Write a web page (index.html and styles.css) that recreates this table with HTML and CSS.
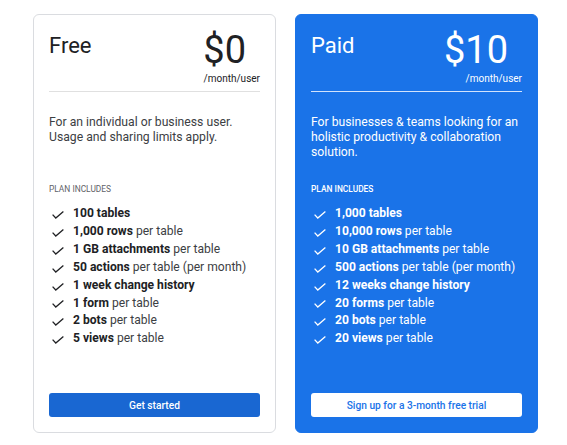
FILE: index.html
```html
<!DOCTYPE html>
<html>
<head>
<meta charset="utf-8">
<link rel="stylesheet" href="styles.css">
</head>
<body>
<div class="plans">
  <div class="card card-free">
    <div class="head">
      <div class="title">Free</div>
      <div class="price-block">
        <div class="price">$0</div>
        <div class="per">/month/user</div>
      </div>
    </div>
    <div class="divider"></div>
    <p class="desc">For an individual or business user. Usage and sharing limits apply.</p>
    <div class="includes">PLAN INCLUDES</div>
    <ul class="features">
      <li><svg class="check" viewBox="0 0 12 8"><path d="M0.6 3.6 L3.8 7 L11.4 0.6"/></svg><span><b>100 tables</b></span></li>
      <li><svg class="check" viewBox="0 0 12 8"><path d="M0.6 3.6 L3.8 7 L11.4 0.6"/></svg><span><b>1,000 rows</b> per table</span></li>
      <li><svg class="check" viewBox="0 0 12 8"><path d="M0.6 3.6 L3.8 7 L11.4 0.6"/></svg><span><b>1 GB attachments</b> per table</span></li>
      <li><svg class="check" viewBox="0 0 12 8"><path d="M0.6 3.6 L3.8 7 L11.4 0.6"/></svg><span><b>50 actions</b> per table (per month)</span></li>
      <li><svg class="check" viewBox="0 0 12 8"><path d="M0.6 3.6 L3.8 7 L11.4 0.6"/></svg><span><b>1 week change history</b></span></li>
      <li><svg class="check" viewBox="0 0 12 8"><path d="M0.6 3.6 L3.8 7 L11.4 0.6"/></svg><span><b>1 form</b> per table</span></li>
      <li><svg class="check" viewBox="0 0 12 8"><path d="M0.6 3.6 L3.8 7 L11.4 0.6"/></svg><span><b>2 bots</b> per table</span></li>
      <li><svg class="check" viewBox="0 0 12 8"><path d="M0.6 3.6 L3.8 7 L11.4 0.6"/></svg><span><b>5 views</b> per table</span></li>
    </ul>
    <button class="btn">Get started</button>
  </div>
  <div class="card card-paid">
    <div class="head">
      <div class="title">Paid</div>
      <div class="price-block">
        <div class="price">$10</div>
        <div class="per">/month/user</div>
      </div>
    </div>
    <div class="divider"></div>
    <p class="desc">For businesses &amp; teams looking for an holistic productivity &amp; collaboration solution.</p>
    <div class="includes">PLAN INCLUDES</div>
    <ul class="features">
      <li><svg class="check" viewBox="0 0 12 8"><path d="M0.6 3.6 L3.8 7 L11.4 0.6"/></svg><span><b>1,000 tables</b></span></li>
      <li><svg class="check" viewBox="0 0 12 8"><path d="M0.6 3.6 L3.8 7 L11.4 0.6"/></svg><span><b>10,000 rows</b> per table</span></li>
      <li><svg class="check" viewBox="0 0 12 8"><path d="M0.6 3.6 L3.8 7 L11.4 0.6"/></svg><span><b>10 GB attachments</b> per table</span></li>
      <li><svg class="check" viewBox="0 0 12 8"><path d="M0.6 3.6 L3.8 7 L11.4 0.6"/></svg><span><b>500 actions</b> per table (per month)</span></li>
      <li><svg class="check" viewBox="0 0 12 8"><path d="M0.6 3.6 L3.8 7 L11.4 0.6"/></svg><span><b>12 weeks change history</b></span></li>
      <li><svg class="check" viewBox="0 0 12 8"><path d="M0.6 3.6 L3.8 7 L11.4 0.6"/></svg><span><b>20 forms</b> per table</span></li>
      <li><svg class="check" viewBox="0 0 12 8"><path d="M0.6 3.6 L3.8 7 L11.4 0.6"/></svg><span><b>20 bots</b> per table</span></li>
      <li><svg class="check" viewBox="0 0 12 8"><path d="M0.6 3.6 L3.8 7 L11.4 0.6"/></svg><span><b>20 views</b> per table</span></li>
    </ul>
    <button class="btn btn-light">Sign up for a 3-month free trial</button>
  </div>
</div>
</body>
</html>
```
FILE: styles.css
```css
* { box-sizing: border-box; }
html, body { margin: 0; padding: 0; background: #ffffff; }
body { font-family: Roboto, "Liberation Sans", sans-serif; }

.plans {
  display: flex;
  gap: 19px;
  padding: 14px 0 0 33px;
}

.card {
  width: 243px;
  height: 419px;
  border-radius: 6px;
  padding: 16px 15px 15px;
  display: flex;
  flex-direction: column;
}
.card-free {
  background: #ffffff;
  border: 1px solid #dadce0;
  color: #202124;
}
.card-paid {
  background: #1a73e8;
  border: 1px solid #1a73e8;
  color: #ffffff;
}

.head {
  display: flex;
  justify-content: space-between;
  align-items: flex-start;
}
.title {
  font-size: 22px;
  line-height: 22px;
  margin-top: 4px;
}
.price-block {
  display: flex;
  flex-direction: column;
  align-items: flex-end;
}
.price {
  font-size: 38px;
  line-height: 38px;
  margin-right: 14px;
}
.per {
  font-size: 10px;
  line-height: 13px;
  margin-top: 3px;
}

.divider {
  height: 1px;
  margin-top: 6px;
  background: #e0e0e0;
}
.card-paid .divider { background: #d2e3fc; }

.desc {
  margin: 23px 0 0;
  font-size: 12.2px;
  line-height: 15px;
  height: 45px;
  color: #3c4043;
}
.card-paid .desc { color: #ffffff; }

.includes {
  margin-top: 24px;
  font-size: 8.4px;
  line-height: 10px;
  color: #5f6368;
}
.card-paid .includes { color: #ffffff; font-weight: 500; }

.features {
  list-style: none;
  margin: 11px 0 0;
  padding: 0;
}
.features li {
  display: flex;
  align-items: center;
  font-size: 12.1px;
  line-height: 17.9px;
  color: #3c4043;
}
.card-paid .features li { color: #ffffff; }
.features b { color: #202124; font-weight: 700; }
.card-paid .features b { color: #ffffff; }

.check {
  width: 12px;
  height: 8px;
  margin: 2px 9px 0 3px;
  flex: none;
  fill: none;
  stroke: #202124;
  stroke-width: 1.3;
}
.card-paid .check { stroke: #ffffff; }

.btn {
  margin-top: auto;
  height: 24px;
  border: none;
  border-radius: 3px;
  background: #1967d2;
  color: #ffffff;
  font-family: Roboto, "Liberation Sans", sans-serif;
  font-size: 10.2px;
  font-weight: 500;
  cursor: pointer;
}
.btn-light {
  background: #ffffff;
  color: #1a73e8;
}
```
